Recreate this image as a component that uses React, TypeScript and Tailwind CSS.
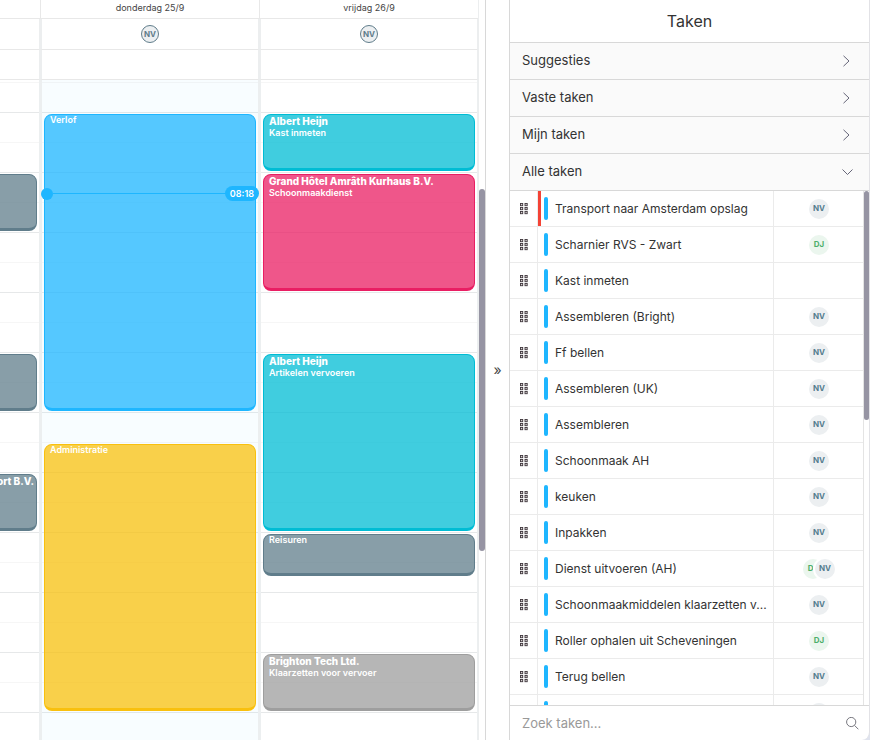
import { useState } from 'react';

type Color = 'blue' | 'teal' | 'pink' | 'slate' | 'yellow' | 'gray';

interface CalendarEvent {
    start: number;
    end: number;
    title?: string;
    text?: string;
    color: Color;
}

interface Task {
    title: string;
    users: string[];
    urgent?: boolean;
}

const HOUR_HEIGHT = 60;
const DAY_START = 6.5;
const GRID_OFFSET = 2;

const eventColors: Record<Color, string> = {
    blue: 'border-[#1eb6ff] bg-[#1eb6ff]/75',
    teal: 'border-[#00bcd4] bg-[#00bcd4]/75',
    pink: 'border-[#e91e63] bg-[#e91e63]/75',
    slate: 'border-[#607d8b] bg-[#607d8b]/75',
    yellow: 'border-[#f9c00e] bg-[#f9c00e]/75',
    gray: 'border-[#9e9e9e] bg-[#9e9e9e]/75',
};

const wednesday: CalendarEvent[] = [
    { start: 8, end: 9, color: 'slate' },
    { start: 11, end: 12, color: 'slate' },
    { start: 13, end: 14, title: 'ort B.V.', color: 'slate' },
];

const thursday: CalendarEvent[] = [
    { start: 7, end: 12, text: 'Verlof', color: 'blue' },
    { start: 12.5, end: 17, text: 'Administratie', color: 'yellow' },
];

const friday: CalendarEvent[] = [
    { start: 7, end: 8, title: 'Albert Heijn', text: 'Kast inmeten', color: 'teal' },
    { start: 8, end: 10, title: 'Grand Hôtel Amrâth Kurhaus B.V.', text: 'Schoonmaakdienst', color: 'pink' },
    { start: 11, end: 14, title: 'Albert Heijn', text: 'Artikelen vervoeren', color: 'teal' },
    { start: 14, end: 14.75, text: 'Reisuren', color: 'slate' },
    { start: 16, end: 17, title: 'Brighton Tech Ltd.', text: 'Klaarzetten voor vervoer', color: 'gray' },
];

const tasks: Task[] = [
    { title: 'Transport naar Amsterdam opslag', users: ['NV'], urgent: true },
    { title: 'Scharnier RVS - Zwart', users: ['DJ'] },
    { title: 'Kast inmeten', users: [] },
    { title: 'Assembleren (Bright)', users: ['NV'] },
    { title: 'Ff bellen', users: ['NV'] },
    { title: 'Assembleren (UK)', users: ['NV'] },
    { title: 'Assembleren', users: ['NV'] },
    { title: 'Schoonmaak AH', users: ['NV'] },
    { title: 'keuken', users: ['NV'] },
    { title: 'Inpakken', users: ['NV'] },
    { title: 'Dienst uitvoeren (AH)', users: ['DJ', 'NV'] },
    { title: 'Schoonmaakmiddelen klaarzetten v...', users: ['NV'] },
    { title: 'Roller ophalen uit Scheveningen', users: ['DJ'] },
    { title: 'Terug bellen', users: ['NV'] },
    { title: '', users: [''] },
];

const yOf = (hour: number) => (hour - DAY_START) * HOUR_HEIGHT + GRID_OFFSET;

// Icons
const ChevronIcon = ({ open }: { open: boolean }) => (
    <svg className="w-3 h-3 text-[#55556a]" viewBox="0 0 12 12" fill="none" stroke="currentColor" strokeWidth={0.9}>
        <path d={open ? 'M0.5 3.5L5.5 8.5l5-5' : 'M1.5 0.8L7 6l-5.5 5.2'} />
    </svg>
);

const GripIcon = () => (
    <svg className="w-2 h-3" viewBox="0 0 8 12" fill="#d8d4d4" stroke="#40373d" strokeWidth={0.9}>
        {[0.5, 4.5, 8.5].map(y => (
            <g key={y}>
                <rect x="0.5" y={y} width="2.2" height="2.2" />
                <rect x="5" y={y} width="2.2" height="2.2" />
            </g>
        ))}
    </svg>
);

const SearchIcon = () => (
    <svg className="w-[13px] h-[13px] text-[#77777f]" viewBox="0 0 13 13" fill="none" stroke="currentColor">
        <circle cx="5.2" cy="5" r="4.6" />
        <path d="M8.5 8.4l3.9 3.9" />
    </svg>
);

const EventCard = ({ event }: { event: CalendarEvent }) => (
    <div
        className={`absolute left-[2px] right-[2px] overflow-hidden rounded-lg border border-b-[3px] pl-[5px] pr-[2px] text-white whitespace-nowrap ${eventColors[event.color]}`}
        style={{ top: yOf(event.start) + 2, height: (event.end - event.start) * HOUR_HEIGHT - 3 }}
    >
        {event.title && <div className="pb-px text-[10px] leading-3 font-extrabold">{event.title}</div>}
        {event.text && <div className="text-[9px] leading-[10px] font-semibold">{event.text}</div>}
    </div>
);

const DayHeader = ({ label }: { label: string }) => (
    <div className="flex-1 min-w-0">
        <div className="h-[19px] border-l border-b border-[#e8e8e8] text-center text-[9px] leading-4 text-[#444]">{label}</div>
        <div className="flex h-[31px] items-center justify-center border-l-2 border-r border-b border-[#eceeef] border-b-[#e8e8e8]">
            <span className="flex size-[18px] items-center justify-center rounded-full border border-[#607d8b] bg-[#eceff1] text-[8px] font-bold text-[#607d8b]">
                NV
            </span>
        </div>
        <div className="h-[30px] border-l-2 border-r border-b border-[#eceeef] border-b-[#e8e8e8]" />
    </div>
);

const Calendar = () => (
    <div className="flex min-w-0 flex-1 border-r border-[#d8d8d8]">
        <div className="flex min-w-0 flex-1 flex-col">
            <div className="flex shrink-0">
                <div className="w-10 shrink-0">
                    <div className="h-[19px] border-b border-[#e8e8e8]" />
                    <div className="h-[31px] border-r border-b border-[#eceeef] border-b-[#e8e8e8]" />
                    <div className="h-[30px] border-r border-b border-[#eceeef] border-b-[#e8e8e8]" />
                </div>
                <DayHeader label="donderdag 25/9" />
                <DayHeader label="vrijdag 26/9" />
            </div>
            <div className="relative flex min-h-0 flex-1 overflow-hidden">
                <div className="absolute inset-0 pt-[2px]">
                    {Array.from({ length: 40 }, (_, i) => (
                        <div key={i} className={`h-[30px] border-t ${i % 2 ? 'border-[#e6e8e9]' : 'border-[#f6f6f6]'}`} />
                    ))}
                </div>
                {/* tail of the previous day, the rest is scrolled out */}
                <div className="relative w-10 shrink-0 border-r border-[#eceff0]">
                    <div className="absolute inset-y-0 right-0 w-[51px] text-right">
                        {wednesday.map(event => <EventCard key={event.start} event={event} />)}
                    </div>
                </div>
                <div className="relative min-w-0 flex-1 border-l-2 border-r border-[#eceff0] bg-[#1eb6ff]/3">
                    {thursday.map(event => <EventCard key={event.start} event={event} />)}
                    {/* current time */}
                    <div className="absolute -left-px -right-px flex h-[15px] items-center" style={{ top: yOf(8.3) - 4 }}>
                        <span className="size-3 rounded-full bg-[#1eb6ff]" />
                        <span className="h-px flex-1 bg-[#1eb6ff]" />
                        <span className="rounded-full bg-[#1eb6ff] px-[5px] text-[9px] leading-[15px] font-semibold text-white">08:18</span>
                    </div>
                </div>
                <div className="relative min-w-0 flex-1 border-l-2 border-r border-[#eceff0]">
                    {friday.map(event => <EventCard key={event.start} event={event} />)}
                </div>
            </div>
        </div>
        <div className="w-[7px] shrink-0 border-l border-[#eceeef] pt-[189px]">
            <div className="h-[362px] rounded-full bg-[#9694a3]" />
        </div>
    </div>
);

const UserBadge = ({ name }: { name: string }) => (
    <span
        className={`flex size-5 items-center justify-center rounded-full text-[8px] font-bold ring-2 ring-white ${name === 'DJ'
            ? 'bg-[#ebf6ee] text-[#4caf6a]'
            : 'bg-[#eceff1] text-[#547d8e]'
            }`}
    >
        {name}
    </span>
);

const TaskRow = ({ task }: { task: Task }) => (
    <tr className="h-9">
        <td className="border-r border-b border-[#ebebeb] p-0">
            <div className="flex justify-center"><GripIcon /></div>
        </td>
        <td className="border-r border-b border-[#ebebeb] p-0">
            <div className={`flex h-[35px] items-center gap-[7px] border-l-[3px] pl-[3px] pr-1 ${task.urgent ? 'border-[#f44336]' : 'border-transparent'}`}>
                <span className="h-[23px] w-1 shrink-0 rounded-sm bg-[#1eb6ff]" />
                <span className="truncate">{task.title}</span>
            </div>
        </td>
        <td className="border-b border-[#ebebeb] p-0 pl-px">
            <div className="flex justify-center -space-x-2">
                {task.users.map(user => <UserBadge key={user} name={user} />)}
            </div>
        </td>
    </tr>
);

const TaskPanel = () => {
    const [openSection, setOpenSection] = useState('Alle taken');
    const [query, setQuery] = useState('');

    const visible = tasks.filter(t => t.title.toLowerCase().includes(query.toLowerCase()));

    return (
        <aside className="w-[361px] shrink-0 bg-[#dfe3ee]">
            <div className="flex h-full flex-col overflow-hidden rounded-br-lg border-x border-[#d8d8d8] border-r-[#e2e2e6] bg-white">
                <h2 className="h-[43px] shrink-0 border-b border-[#d8d8d8] text-center text-base leading-[42px] text-[#333]">Taken</h2>
                {['Suggesties', 'Vaste taken', 'Mijn taken', 'Alle taken'].map(section => (
                    <button
                        key={section}
                        type="button"
                        aria-expanded={openSection === section}
                        onClick={() => setOpenSection(section)}
                        className="flex h-[37px] shrink-0 items-center justify-between border-b border-[#d8d8d8] bg-[#fafafa] pl-3 pr-[15px] text-[13px]"
                    >
                        {section}
                        <ChevronIcon open={openSection === section} />
                    </button>
                ))}
                <div className="flex min-h-0 flex-1 overflow-hidden">
                    <div className="min-w-0 flex-1">
                        <table className="w-full table-fixed border-separate border-spacing-0 text-xs">
                            <colgroup>
                                <col className="w-7" />
                                <col />
                                <col className="w-[89px]" />
                            </colgroup>
                            <tbody>
                                {visible.map(task => <TaskRow key={task.title} task={task} />)}
                            </tbody>
                        </table>
                    </div>
                    <div className="w-[6px] shrink-0 border-l border-[#e4e4e4]">
                        <div className="h-[229px] rounded-full bg-[#9694a3]" />
                    </div>
                </div>
                <label className="flex h-[35px] shrink-0 items-center border-t border-[#d8d8d8] pl-3 pr-[10px]">
                    <input
                        type="text"
                        aria-label="Zoek taken"
                        placeholder="Zoek taken..."
                        value={query}
                        onChange={e => setQuery(e.target.value)}
                        className="min-w-0 flex-1 pt-px text-[13px] outline-none placeholder:text-[#999]"
                    />
                    <SearchIcon />
                </label>
            </div>
        </aside>
    );
};

export default function App() {
    return (
        <div className="flex h-screen overflow-hidden bg-white font-[Inter,'Open_Sans',sans-serif] text-[#333]">
            <Calendar />
            <button type="button" className="w-[23px] shrink-0 text-sm text-[#444]">»</button>
            <TaskPanel />
        </div>
    );
}
